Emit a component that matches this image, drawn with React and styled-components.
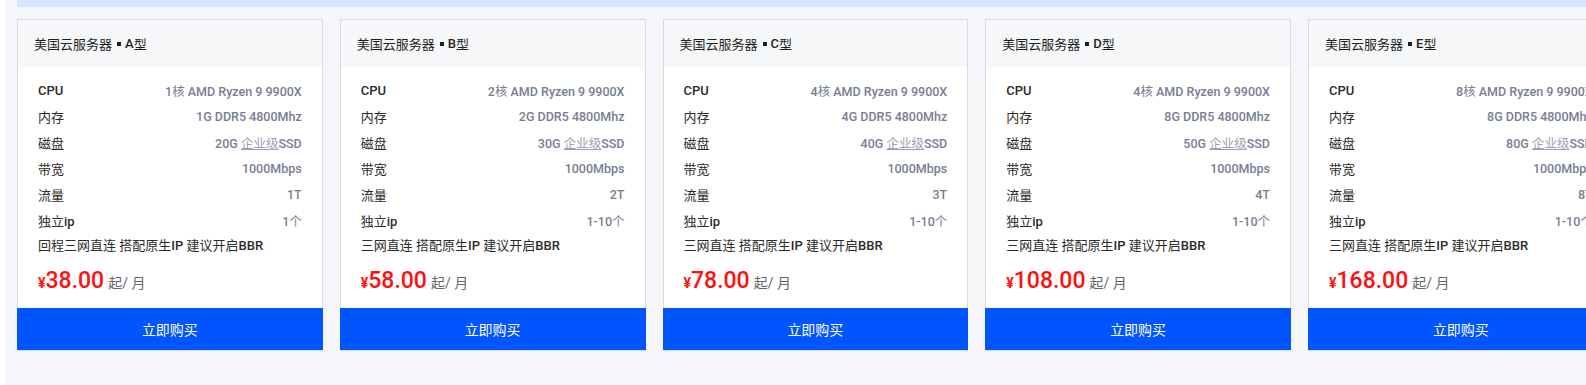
import React from "react";
import styled, { createGlobalStyle } from "styled-components";

const GlobalStyle = createGlobalStyle`
  html, body {
    margin: 0;
    padding: 0;
    background: #ffffff;
  }
  body {
    font-family: Roboto, "Noto Sans CJK SC", sans-serif;
  }
`;

const plans = [
  { id: "A", cpu: "1", mem: "1G", disk: "20G", flow: "1T", ip: "1", note: "回程三网直连 搭配原生IP 建议开启BBR", price: "38.00" },
  { id: "B", cpu: "2", mem: "2G", disk: "30G", flow: "2T", ip: "1-10", note: "三网直连 搭配原生IP 建议开启BBR", price: "58.00" },
  { id: "C", cpu: "4", mem: "4G", disk: "40G", flow: "3T", ip: "1-10", note: "三网直连 搭配原生IP 建议开启BBR", price: "78.00" },
  { id: "D", cpu: "4", mem: "8G", disk: "50G", flow: "4T", ip: "1-10", note: "三网直连 搭配原生IP 建议开启BBR", price: "108.00" },
  { id: "E", cpu: "8", mem: "8G", disk: "80G", flow: "8T", ip: "1-10", note: "三网直连 搭配原生IP 建议开启BBR", price: "168.00" },
];

// split latin runs (medium weight) from han runs (regular weight)
function Mixed({ text }) {
  const parts = text.match(/[\u3400-\u9fff\u4e00-\u9fff]+|[^\u3400-\u9fff]+/g) || [];
  return parts.map((s, i) =>
    /[\u3400-\u9fff]/.test(s) ? <Han key={i}>{s}</Han> : <span key={i}>{s}</span>
  );
}

export default function App() {
  return (
    <>
      <GlobalStyle />
      <Page>
        <TopBar />
        <CardRow>
          {plans.map((p) => (
            <Card key={p.id}>
              <CardHead>
                <Han>美国云服务器</Han>
                <Dot />
                {p.id}
                <Han>型</Han>
              </CardHead>
              <CardBody>
                <Spec>
                  <Label>CPU</Label>
                  <Value>
                    {p.cpu}<Han>核</Han> AMD Ryzen 9 9900X
                  </Value>
                </Spec>
                <Spec>
                  <Label><Han>内存</Han></Label>
                  <Value>{p.mem} DDR5 4800Mhz</Value>
                </Spec>
                <Spec>
                  <Label><Han>磁盘</Han></Label>
                  <Value>
                    {p.disk} <Faint>企业级</Faint>SSD
                  </Value>
                </Spec>
                <Spec>
                  <Label><Han>带宽</Han></Label>
                  <Value>1000Mbps</Value>
                </Spec>
                <Spec>
                  <Label><Han>流量</Han></Label>
                  <Value>{p.flow}</Value>
                </Spec>
                <Spec>
                  <Label><Han>独立</Han>ip</Label>
                  <Value>
                    {p.ip}<Han>个</Han>
                  </Value>
                </Spec>
                <Note>
                  <Mixed text={p.note} />
                </Note>
                <Price>
                  <Yen>¥</Yen>
                  <Amount>{p.price}</Amount>
                  <Unit>起/ 月</Unit>
                </Price>
              </CardBody>
              <BuyButton>立即购买</BuyButton>
            </Card>
          ))}
        </CardRow>
      </Page>
    </>
  );
}

const Page = styled.div`
  margin-left: 5px;
  padding-left: 12px;
  min-height: 385px;
  background: #f5f6fa;
  overflow: hidden;
`;

const TopBar = styled.div`
  height: 7px;
  background: #d7e6ff;
`;

const CardRow = styled.div`
  display: flex;
  gap: 17px;
  margin-top: 12px;
`;

const Card = styled.div`
  flex: 0 0 305.75px;
  box-sizing: border-box;
  display: flex;
  flex-direction: column;
  background: #ffffff;
  border: 1px solid #d9dbe1;
`;

const Han = styled.span`
  font-weight: 400;
`;

const CardHead = styled.div`
  height: 47px;
  display: flex;
  align-items: center;
  padding-left: 16px;
  background: #f6f7f9;
  color: #1f1f1f;
  font-size: 13px;
  font-weight: 500;
`;

const Dot = styled.span`
  display: inline-block;
  width: 4px;
  height: 4px;
  margin: 1px 4px 0 5px;
  background: #1f1f1f;
`;

const CardBody = styled.div`
  padding: 10px 20px 9px;
`;

const Spec = styled.div`
  display: flex;
  justify-content: space-between;
  align-items: center;
  height: 26px;
  font-size: 13px;
`;

const Label = styled.span`
  color: #2b2b2b;
  font-weight: 500;
`;

const Value = styled.span`
  color: #787d94;
  font-size: 12.5px;
  font-weight: 500;
`;

const Faint = styled.span`
  color: #9a9eb0;
  font-weight: 400;
  text-decoration: underline;
  text-underline-offset: 1px;
`;

const Note = styled.div`
  height: 26px;
  line-height: 26px;
  font-size: 13px;
  font-weight: 500;
  color: #2b2b2b;
`;

const Price = styled.div`
  display: flex;
  align-items: baseline;
  height: 32px;
  margin-top: 8px;
  color: #ff1010;
`;

const Yen = styled.span`
  font-size: 14px;
  font-weight: 700;
`;

const Amount = styled.span`
  font-size: 23px;
  font-weight: 500;
  margin-right: 4px;
`;

const Unit = styled.span`
  font-size: 14px;
  color: #666666;
`;

const BuyButton = styled.button`
  height: 42px;
  margin: 0 -1px;
  border: none;
  background: #0055ff;
  color: #ffffff;
  font-family: inherit;
  font-size: 14px;
  cursor: pointer;
`;
